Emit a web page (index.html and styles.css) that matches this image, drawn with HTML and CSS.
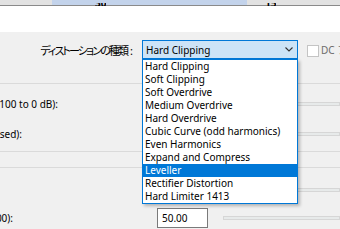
FILE: index.html
```html
<!DOCTYPE html>
<html lang="ja">

<head>
    <meta charset="utf-8">
    <title>ディストーション</title>
    <link rel="stylesheet" href="styles.css">
</head>

<body>

    <div class="meter">
        <div class="seg cold"></div>
        <div class="seg hot"></div>
        <div class="seg rest"></div>
        <span class="tick t30"><span>30</span></span>
        <span class="tick t15"><span>15</span></span>
    </div>
    <div class="blank"></div>

    <div class="panel">
        <div class="type-row">
            <span class="type-label">ディストーションの種類<span class="colon">:</span></span>
            <div class="combo">
                <span>Hard Clipping</span>
                <svg width="8" height="5" viewBox="0 0 8 5"><polyline points="0.5,0.5 4,4 7.5,0.5" fill="none" stroke="#333" stroke-width="1.1"/></svg>
            </div>
            <span class="check"></span>
            <span class="dc">DC フィルター</span>
        </div>

        <div class="group g1">
            <div class="param">
                <span class="lbl l1">Clipping level (-100 to 0 dB):</span>
                <span class="field">-6.00</span>
                <span class="track"></span>
            </div>
            <div class="param">
                <span class="lbl l2">Noise floor (Not Used):</span>
                <span class="field">-70.00</span>
                <span class="track"></span>
            </div>
        </div>

        <div class="group g2">
            <div class="param">
                <span class="lbl"></span>
                <span class="field">50.00</span>
                <span class="track"></span>
            </div>
            <div class="param">
                <span class="lbl l4">Make-up Gain (0 to 100):</span>
                <span class="field">50.00</span>
                <span class="track"></span>
            </div>
        </div>
    </div>

    <ul class="dropdown">
        <li>Hard Clipping</li>
        <li>Soft Clipping</li>
        <li>Soft Overdrive</li>
        <li>Medium Overdrive</li>
        <li>Hard Overdrive</li>
        <li>Cubic Curve (odd harmonics)</li>
        <li>Even Harmonics</li>
        <li>Expand and Compress</li>
        <li class="sel">Leveller</li>
        <li>Rectifier Distortion</li>
        <li>Hard Limiter 1413</li>
    </ul>

</body>

</html>
```

FILE: styles.css
```css
* {
    box-sizing: border-box;
}

body {
    margin: 0;
    width: 340px;
    height: 229px;
    overflow: hidden;
    position: relative;
    background-color: #f0f0f0;
    font-family: "Noto Sans", "Noto Sans CJK JP", sans-serif;
    font-size: 10px;
    color: #000;
}

.meter {
    display: flex;
    height: 6px;
    border-bottom: 1px solid #8a8a8a;
    position: relative;
}

.seg {
    background-color: #e2e2e2;
}

.cold {
    width: 52px;
}

.hot {
    width: 195px;
    background-color: #c3d3eb;
}

.rest {
    flex: 1;
}

.tick {
    position: absolute;
    top: 3px;
    height: 3px;
    overflow: hidden;
    font-size: 10px;
    font-weight: bold;
    line-height: 10px;
}

.tick span {
    display: block;
    margin-top: -5px;
}

.t30 {
    left: 95px;
}

.t15 {
    left: 265px;
}

.blank {
    height: 26px;
    background-color: #fff;
}

.type-row {
    display: flex;
    align-items: center;
    padding-top: 8px;
    overflow: hidden;
}

.type-label {
    flex: none;
    width: 142px;
    padding-right: 9px;
    text-align: right;
    font-family: "Noto Sans CJK JP", sans-serif;
    font-size: 11px;
    font-feature-settings: "palt";
    letter-spacing: -1.9px;
    white-space: nowrap;
}

.colon {
    font-family: "Noto Sans", sans-serif;
    letter-spacing: 0;
    margin-left: 3px;
}

.combo {
    flex: none;
    width: 156px;
    height: 19px;
    border: 1px solid #0078d7;
    background-color: #cce4f7;
    display: flex;
    align-items: center;
    justify-content: space-between;
    padding: 0 4px 0 3px;
}

.check {
    width: 12px;
    height: 12px;
    margin-left: 9px;
    margin-top: 3px;
    border: 1px solid #c4c4c4;
    background-color: #fff;
    flex: none;
}

.dc {
    flex: none;
    margin-left: 2px;
    color: #6d6d6d;
    white-space: nowrap;
}

.group {
    display: flex;
    flex-direction: column;
    border-top: 1px solid #dadada;
}

.g1 {
    margin-top: 24px;
    padding: 10px 0 7px;
    gap: 10px;
    border-bottom: 1px solid #dadada;
}

.g2 {
    margin-top: 15px;
    padding-top: 12px;
    gap: 8px;
}

.param {
    display: grid;
    grid-template-columns: 142px 51px 1fr;
    column-gap: 15px;
    align-items: center;
    height: 20px;
}

.lbl {
    display: flex;
    justify-content: flex-end;
    white-space: nowrap;
}

.l1 {
    padding-right: 84px;
}

.l2 {
    padding-right: 120px;
}

.l4 {
    padding-right: 129px;
}

.field {
    height: 20px;
    border: 1px solid #7a7a7a;
    background-color: #fff;
    padding-left: 4px;
    line-height: 18px;
}

.track {
    height: 4px;
    border: 1px solid #d6d6d6;
    background-color: #e7eaea;
}

.dropdown {
    position: absolute;
    left: 142px;
    top: 59px;
    width: 156px;
    margin: 0;
    padding: 0;
    list-style: none;
    background-color: #fff;
    border: 1px solid #0078d7;
    box-shadow: 2px 2px 3px rgba(0, 0, 0, 0.25);
}

.dropdown li {
    height: 13px;
    line-height: 13px;
    padding-left: 2px;
    white-space: nowrap;
}

.dropdown .sel {
    background-color: #0078d7;
    color: #fff;
}
```
